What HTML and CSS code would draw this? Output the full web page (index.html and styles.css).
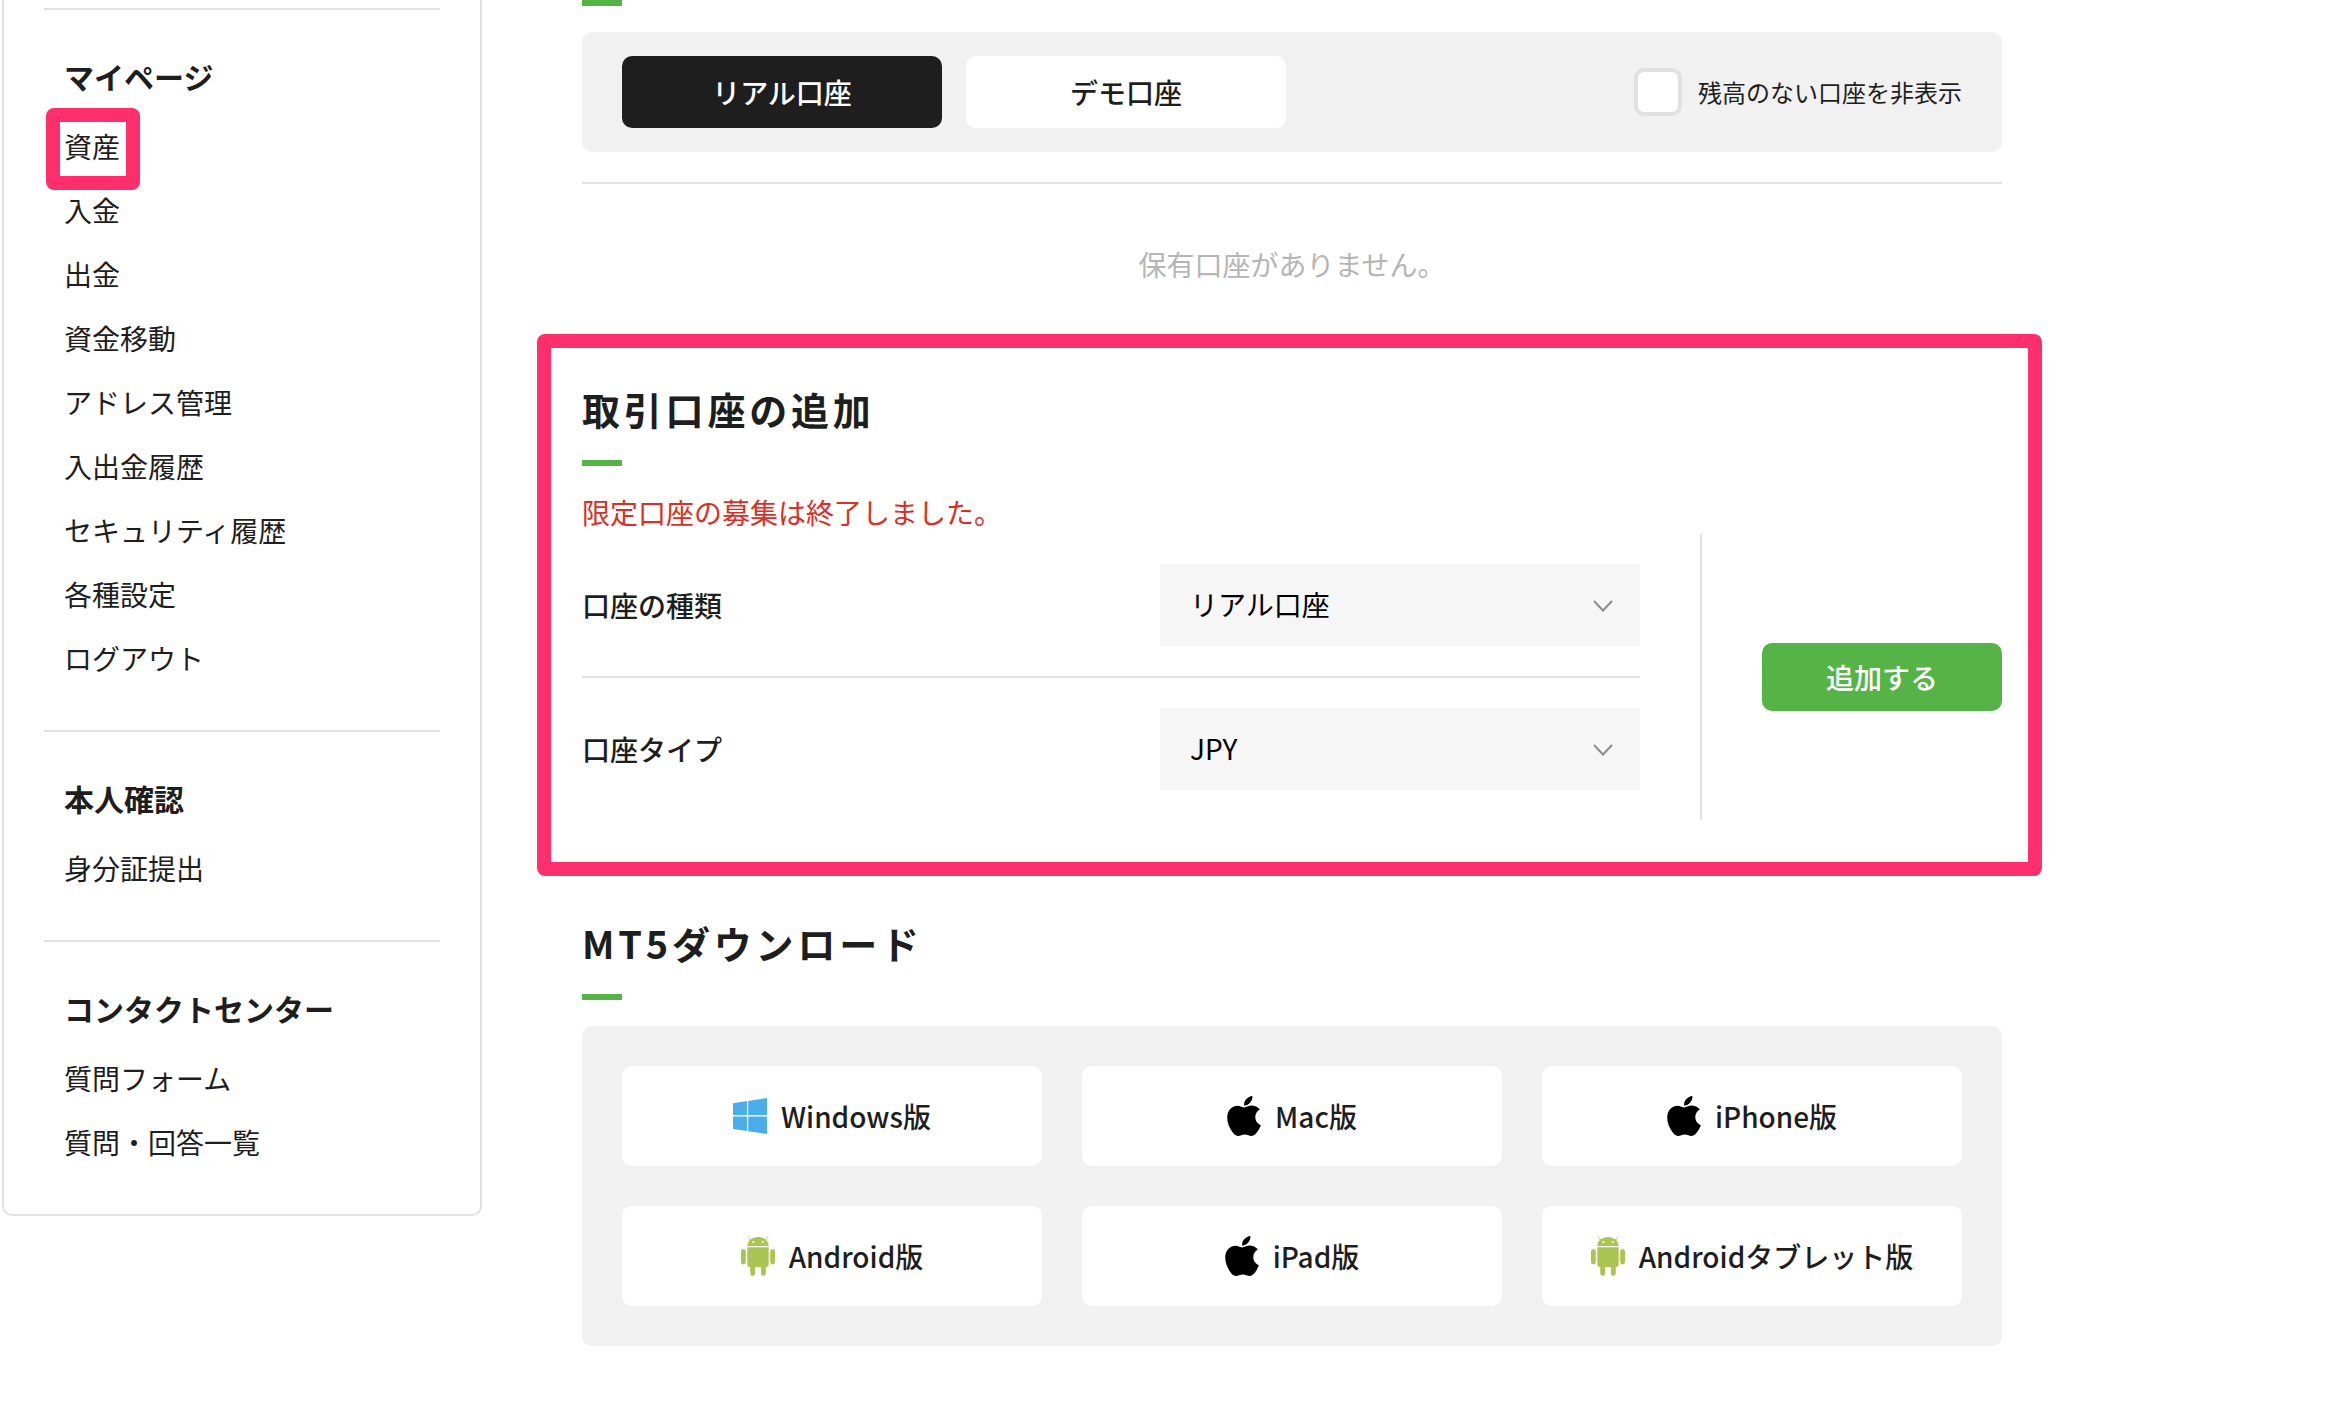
FILE: index.html
```html
<!DOCTYPE html>
<html lang="ja">
<head>
<meta charset="utf-8">
<meta name="viewport" content="width=device-width, initial-scale=1">
<title>資産</title>
<link rel="stylesheet" href="styles.css">
</head>
<body>
<svg class="sprite" aria-hidden="true">
  <symbol id="icon-windows" viewBox="0 0 34 36">
    <path d="M0 5.2 13.9 3.1V16.9H0zM15.2 2.9 34 0V16.9H15.2zM0 18.6H13.9V33L0 31zM15.2 18.6H34V36L15.2 33.2z"/>
  </symbol>
  <symbol id="icon-apple" viewBox="4 32 376 448">
    <path d="M318.7 268.7c-.2-36.7 16.4-64.4 50-84.8-18.8-26.9-47.2-41.7-84.7-44.6-35.5-2.8-74.3 20.7-88.5 20.7-15 0-49.4-19.7-76.4-19.7C63.3 141.2 4 184.8 4 273.5q0 39.3 14.4 81.2c12.8 36.7 59 126.7 107.2 125.2 25.2-.6 43-17.9 75.8-17.9 31.8 0 48.3 17.9 76.4 17.9 48.6-.7 90.4-82.5 102.6-119.3-65.2-30.7-61.7-90-61.7-91.9zm-56.6-164.2c27.3-32.4 24.8-61.9 24-72.5-24.1 1.4-52 16.4-67.9 34.9-17.5 19.8-27.8 44.3-25.6 71.9 26.1 2 49.9-11.4 69.5-34.3z"/>
  </symbol>
  <symbol id="icon-android" viewBox="0 0 34 40">
    <path d="M6.3 10C6.5 4.600 11 .9 17 .9S27.500 4.600 27.700 10zM6.300 11.300H27.700V28.500A2.500 2.500 0 0 1 25.200 31H24.800V37.600A2.400 2.400 0 0 1 20 37.600V31H14V37.600A2.400 2.400 0 0 1 9.200 37.600V31H8.800A2.500 2.500 0 0 1 6.300 28.500z"/>
    <rect x="0" y="13" width="4.800" height="15.400" rx="2.400"/>
    <rect x="29.200" y="13" width="4.800" height="15.400" rx="2.400"/>
    <path d="M9.400 4.500 7.100.400M24.600 4.500 26.900.400" fill="none" stroke="currentColor" stroke-width=".7" stroke-linecap="round"/>
    <circle cx="12.400" cy="6" r="1.100" fill="#fff"/>
    <circle cx="21.800" cy="6" r="1.100" fill="#fff"/>
  </symbol>
  <symbol id="icon-chevron" viewBox="0 0 20 12">
    <path d="M1 1 10 10.500 19 1" fill="none" stroke="currentColor" stroke-width="2"/>
  </symbol>
</svg>

<div class="page">
  <nav class="sidebar">
    <section class="nav-group">
      <h2 class="nav-title">マイページ</h2>
      <ul class="nav-list">
        <li class="nav-marked"><a href="#">資産</a></li>
        <li><a href="#">入金</a></li>
        <li><a href="#">出金</a></li>
        <li><a href="#">資金移動</a></li>
        <li><a href="#">アドレス管理</a></li>
        <li><a href="#">入出金履歴</a></li>
        <li><a href="#">セキュリティ履歴</a></li>
        <li><a href="#">各種設定</a></li>
        <li><a href="#">ログアウト</a></li>
      </ul>
    </section>
    <section class="nav-group">
      <h2 class="nav-title">本人確認</h2>
      <ul class="nav-list">
        <li><a href="#">身分証提出</a></li>
      </ul>
    </section>
    <section class="nav-group">
      <h2 class="nav-title">コンタクトセンター</h2>
      <ul class="nav-list">
        <li><a href="#">質問フォーム</a></li>
        <li><a href="#">質問・回答一覧</a></li>
      </ul>
    </section>
  </nav>

  <main class="content">
    <div class="title-rule"></div>
    <div class="panel filter">
      <button class="tab tab-active" type="button">リアル口座</button>
      <button class="tab" type="button">デモ口座</button>
      <label class="hide-empty"><input class="check" type="checkbox">残高のない口座を非表示</label>
    </div>
    <hr class="divider">
    <p class="empty">保有口座がありません。</p>

    <section class="section section-marked">
      <h2 class="title">取引口座の追加</h2>
      <div class="title-rule"></div>
      <p class="notice">限定口座の募集は終了しました。</p>
      <form class="add-form">
        <div class="fields">
          <div class="field">
            <label class="field-label" for="kind">口座の種類</label>
            <div class="select-box">
              <select class="select" id="kind"><option>リアル口座</option><option>デモ口座</option></select>
              <svg class="chevron" aria-hidden="true"><use href="#icon-chevron"/></svg>
            </div>
          </div>
          <div class="field">
            <label class="field-label" for="type">口座タイプ</label>
            <div class="select-box">
              <select class="select" id="type"><option>JPY</option></select>
              <svg class="chevron" aria-hidden="true"><use href="#icon-chevron"/></svg>
            </div>
          </div>
        </div>
        <div class="submit-area">
          <button class="submit" type="button">追加する</button>
        </div>
      </form>
    </section>

    <section class="section">
      <h2 class="title">MT5ダウンロード</h2>
      <div class="title-rule"></div>
      <div class="panel downloads">
        <a class="download" href="#"><svg class="icon icon-windows" aria-hidden="true"><use href="#icon-windows"/></svg>Windows版</a>
        <a class="download" href="#"><svg class="icon" aria-hidden="true"><use href="#icon-apple"/></svg>Mac版</a>
        <a class="download" href="#"><svg class="icon" aria-hidden="true"><use href="#icon-apple"/></svg>iPhone版</a>
        <a class="download" href="#"><svg class="icon icon-android" aria-hidden="true"><use href="#icon-android"/></svg>Android版</a>
        <a class="download" href="#"><svg class="icon" aria-hidden="true"><use href="#icon-apple"/></svg>iPad版</a>
        <a class="download" href="#"><svg class="icon icon-android" aria-hidden="true"><use href="#icon-android"/></svg>Androidタブレット版</a>
      </div>
    </section>
  </main>
</div>
</body>
</html>
```
FILE: styles.css
```css
:root {
  --ink: #1e1e1e;
  --line: #e1e1e1;
  --panel: #f1f1f1;
  --green: #56b346;
  --mark: #ff2e6c;
}

*,
*::after {
  box-sizing: border-box;
}

body {
  margin: 0;
  background: #fff;
  color: var(--ink);
  font-family: "Noto Sans CJK JP", sans-serif;
  font-size: 28px;
  line-height: 42px;
}

h2,
p,
ul {
  margin: 0;
  padding: 0;
}

a {
  color: inherit;
  text-decoration: none;
}

button,
select {
  border: 0;
  font: inherit;
}

.sprite {
  position: absolute;
  width: 0;
  height: 0;
}

.page {
  display: flex;
  align-items: flex-start;
  gap: 100px;
  max-width: 2002px;
  padding-left: 2px;
}

/* Side navigation */
.sidebar {
  flex: 0 0 480px;
  padding: 8px 40px 0;
  border: 2px solid var(--line);
  border-top: 0;
  border-radius: 0 0 10px 10px;
}

.nav-group {
  padding: 36px 20px 40px;
  border-top: 2px solid var(--line);
}

.nav-title {
  margin-bottom: 8px;
  font-size: 30px;
  font-weight: 700;
  line-height: 60px;
}

.nav-list {
  list-style: none;
  line-height: 64px;
}

.nav-marked {
  position: relative;
}

.nav-marked::after {
  content: "";
  position: absolute;
  top: -6px;
  left: -18px;
  width: 94px;
  height: 82px;
  border: 14px solid var(--mark);
  border-radius: 8px;
  pointer-events: none;
}

/* Main column */
.content {
  flex: 1;
  min-width: 0;
}

.title {
  margin-bottom: 23px;
  font-size: 38px;
  font-weight: 700;
  line-height: 56px;
  letter-spacing: 0.1em;
}

.title-rule {
  width: 40px;
  height: 6px;
  background: var(--green);
}

.panel {
  margin-top: 26px;
  background: var(--panel);
  border-radius: 10px;
}

.filter {
  display: flex;
  align-items: center;
  gap: 24px;
  padding: 24px 40px;
}

.tab {
  width: 320px;
  height: 72px;
  border-radius: 10px;
  background: #fff;
  color: var(--ink);
  font-weight: 500;
}

.tab-active {
  background: var(--ink);
  color: #fff;
}

.hide-empty {
  display: flex;
  align-items: center;
  gap: 16px;
  margin-left: auto;
  font-size: 24px;
}

.check {
  appearance: none;
  width: 48px;
  height: 48px;
  margin: 0;
  border: 4px solid var(--line);
  border-radius: 10px;
  background: #fff;
}

.divider {
  height: 2px;
  margin: 30px 0 0;
  border: 0;
  background: var(--line);
}

.empty {
  padding: 59px 0 1px;
  color: #b5b5b5;
  text-align: center;
}

.section {
  margin-top: 95px;
}

.section-marked {
  position: relative;
}

.section-marked::after {
  content: "";
  position: absolute;
  inset: -47px -40px -56px -45px;
  border: 14px solid var(--mark);
  border-radius: 8px;
  pointer-events: none;
}

.notice {
  padding: 25px 0 1px;
  color: #d93025;
}

/* Add-account form */
.add-form {
  display: flex;
}

.fields {
  flex: 1;
}

.field {
  display: flex;
  align-items: center;
  justify-content: space-between;
  padding: 30px 0;
}

.field + .field {
  border-top: 2px solid var(--line);
}

.field-label {
  font-weight: 500;
}

.select-box {
  position: relative;
  width: 480px;
}

.select {
  appearance: none;
  display: block;
  width: 100%;
  height: 82px;
  padding: 0 30px 2px;
  border-radius: 0;
  background: #f6f6f6;
  color: #000;
}

.chevron {
  position: absolute;
  top: 36px;
  right: 27px;
  width: 20px;
  height: 12px;
  color: #8c8c8c;
  pointer-events: none;
}

.submit-area {
  display: flex;
  align-items: center;
  margin-left: 60px;
  padding-left: 60px;
  border-left: 2px solid var(--line);
}

.submit {
  width: 240px;
  height: 68px;
  border-radius: 10px;
  background: var(--green);
  color: #fff;
  font-weight: 500;
}

/* Downloads */
.downloads {
  display: grid;
  grid-template-columns: repeat(3, 1fr);
  gap: 40px;
  padding: 40px;
}

.download {
  display: flex;
  align-items: center;
  justify-content: center;
  gap: 14px;
  height: 100px;
  border-radius: 10px;
  background: #fff;
  font-weight: 500;
}

.icon {
  width: 34px;
  height: 40px;
  fill: #000;
}

.icon-windows {
  height: 36px;
  fill: #4aadea;
}

.icon-android {
  color: #abc452;
  fill: #abc452;
}
```
